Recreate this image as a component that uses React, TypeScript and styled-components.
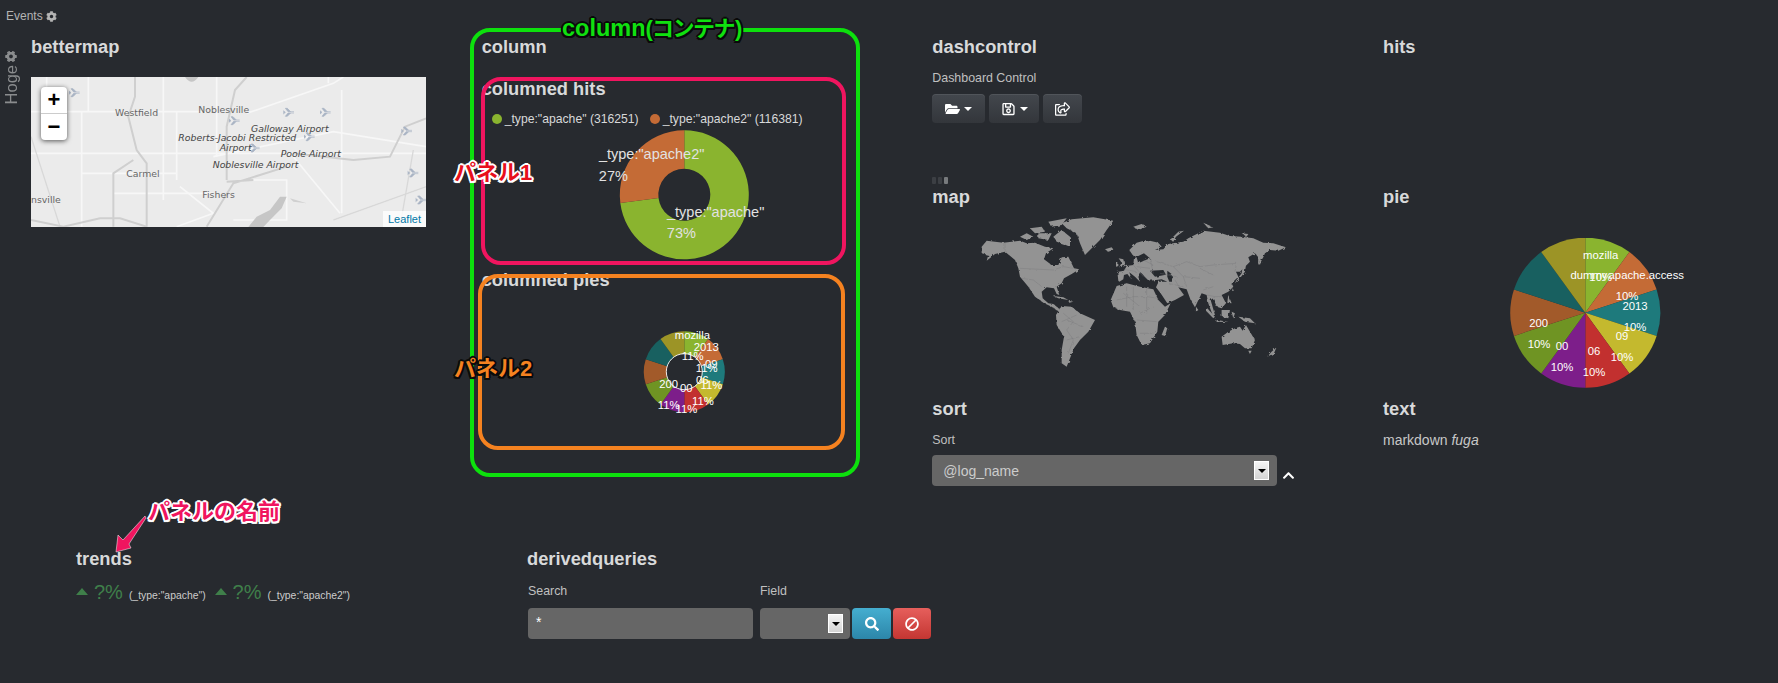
import React from 'react';
import styled, { createGlobalStyle } from 'styled-components';
import { FaBan, FaChevronUp, FaCog, FaFolderOpen, FaRegSave, FaRegShareSquare, FaSearch } from 'react-icons/fa';

const GlobalStyle = createGlobalStyle`
  html, body {
    margin: 0;
    padding: 0;
    background: #272a2f;
    font-family: "Liberation Sans", Arial, sans-serif;
    color: #c8c8c8;
  }
`;

const Page = styled.div`
  position: relative;
  width: 1778px;
  height: 683px;
  overflow: hidden;
  background: #272a2f;
`;

const TopBar = styled.div`
  display: flex;
  align-items: center;
  gap: 3px;
  height: 35px;
  padding: 0 0 3px 6px;
  box-sizing: border-box;
  font-size: 12px;
  color: #b4b4b4;
  svg { width: 11px; height: 11px; }
`;

const MainRow = styled.div`
  display: flex;
  height: 512px;
`;

const Rail = styled.div`
  width: 31px;
  flex: none;
  display: flex;
  align-items: flex-start;
  justify-content: center;
  padding-top: 15px;
  box-sizing: border-box;
`;

const RailLabel = styled.div`
  display: flex;
  align-items: center;
  gap: 3px;
  writing-mode: vertical-rl;
  transform: rotate(180deg);
  margin-left: -8px;
  font-size: 16.5px;
  color: #8a8c8e;
  svg { width: 12px; height: 12px; transform: rotate(90deg); }
`;

const Columns = styled.div`
  display: grid;
  grid-template-columns: repeat(4, 450.67px);
`;

const Column = styled.div`
  display: flex;
  flex-direction: column;
  align-items: flex-start;
`;

const Title = styled.h2<{ $top?: number }>`
  margin: ${p => p.$top || 0}px 0 0;
  font-size: 18.3px;
  line-height: 24px;
  font-weight: bold;
  color: #d8d9da;
  white-space: nowrap;
`;

const FieldLabel = styled.div<{ $top?: number }>`
  margin-top: ${p => p.$top ?? 11}px;
  font-size: 12.4px;
  line-height: 16px;
  color: #c0c0c0;
`;

const MapFrame = styled.div`
  position: relative;
  width: 395px;
  height: 150px;
  margin-top: 18px;
  overflow: hidden;
  background: #ebebeb;
  svg { display: block; }
`;

const ZoomControl = styled.div`
  position: absolute;
  left: 10px;
  top: 10px;
  width: 26px;
  border-radius: 4px;
  background: #fff;
  box-shadow: 0 1px 5px rgba(0, 0, 0, 0.65);
`;

const ZoomButton = styled.div`
  height: 26px;
  line-height: 26px;
  text-align: center;
  font-size: 22px;
  font-weight: bold;
  color: #000;
  & + & { border-top: 1px solid #ccc; }
`;

const Attribution = styled.div`
  position: absolute;
  right: 0;
  bottom: 0;
  padding: 0 5px;
  height: 16px;
  line-height: 16px;
  font-size: 11px;
  color: #0078a8;
  background: rgba(255, 255, 255, 0.8);
`;

const Legend = styled.div`
  display: flex;
  align-items: center;
  height: 16px;
  margin-top: 10px;
  padding-left: 10px;
  font-size: 12.2px;
  color: #d8d9da;
`;

const LegendDot = styled.span<{ $color: string; $gap?: number }>`
  width: 10px;
  height: 10px;
  border-radius: 50%;
  margin: 0 3px 0 ${p => p.$gap || 0}px;
  background: ${p => p.$color};
`;

const ChartBox = styled.div<{ $height: number; $top: number; $clip?: boolean }>`
  position: relative;
  width: 405px;
  height: ${p => p.$height}px;
  margin-top: ${p => p.$top}px;
  overflow: ${p => (p.$clip ? 'hidden' : 'visible')};
  svg { display: block; }
`;

const ChartLabel = styled.div<{ $x: number; $y: number; $size: number; $color: string }>`
  position: absolute;
  left: ${p => p.$x}px;
  top: ${p => p.$y}px;
  transform: translate(-50%, -50%);
  font-size: ${p => p.$size}px;
  color: ${p => p.$color};
  white-space: nowrap;
`;

const ButtonRow = styled.div`
  display: flex;
  gap: 4px;
  margin-top: 8px;
`;

const ToolButton = styled.div<{ $width: number }>`
  display: flex;
  align-items: center;
  justify-content: center;
  gap: 4px;
  width: ${p => p.$width}px;
  height: 29px;
  border-radius: 4px;
  color: #fff;
  background: linear-gradient(#43474d, #33363b);
  box-shadow: inset 0 1px 0 rgba(255, 255, 255, 0.08);
  svg { width: 15px; height: 14px; }
`;

const Caret = styled.span`
  width: 0;
  height: 0;
  border-left: 4px solid transparent;
  border-right: 4px solid transparent;
  border-top: 4px solid #fff;
`;

const Grips = styled.div`
  display: flex;
  gap: 2px;
  height: 7px;
  margin-top: 54px;
`;

const Grip = styled.span<{ $on?: boolean }>`
  width: 4px;
  height: 7px;
  border-radius: 1px;
  background: ${p => (p.$on ? '#777a7d' : '#3c3f44')};
`;

const WorldFrame = styled.div`
  width: 405px;
  height: 152px;
  margin-top: 6px;
  padding-left: 48px;
  box-sizing: border-box;
`;

const SortRow = styled.div`
  display: flex;
  align-items: flex-end;
  gap: 5px;
  margin-top: 7px;
  svg { width: 13px; height: 13px; margin-bottom: 4px; color: #fff; }
`;

const SelectBox = styled.div<{ $width: number }>`
  display: flex;
  align-items: center;
  justify-content: space-between;
  width: ${p => p.$width}px;
  height: 31px;
  padding: 0 8px 0 11px;
  box-sizing: border-box;
  border-radius: 4px;
  background: #666;
  font-size: 14px;
  color: #ccc;
`;

const SelectArrow = styled.span`
  display: flex;
  align-items: center;
  justify-content: center;
  width: 15px;
  height: 19px;
  box-sizing: border-box;
  border: 1px solid #fff;
  background: linear-gradient(#f4f4f4, #d4d4d4);
  &::after {
    content: '';
    border-left: 4px solid transparent;
    border-right: 4px solid transparent;
    border-top: 4px solid #000;
  }
`;

const MarkdownText = styled.div`
  margin-top: 9px;
  font-size: 14px;
  line-height: 20px;
  color: #c8c8c8;
`;

const BottomRow = styled.div`
  display: grid;
  grid-template-columns: 451px 451px;
  padding-left: 76px;
`;

const TrendRow = styled.div`
  display: flex;
  align-items: baseline;
  margin-top: 6px;
`;

const TrendItem = styled.div`
  display: flex;
  align-items: baseline;
  margin-right: 9px;
  white-space: nowrap;
`;

const TrendCaret = styled.span`
  align-self: center;
  width: 0;
  height: 0;
  margin: 0 6px 2px 0;
  border-left: 6.5px solid transparent;
  border-right: 6.5px solid transparent;
  border-bottom: 7px solid #3f7f4a;
`;

const TrendValue = styled.span`
  font-size: 20px;
  line-height: 30px;
  color: #3f7f4a;
  margin-right: 6px;
`;

const TrendQuery = styled.span`
  font-size: 10.4px;
  color: #ccc;
`;

const QueryForm = styled.div`
  display: flex;
  align-items: flex-end;
  margin-top: 12px;
`;

const QueryField = styled.div<{ $width: number }>`
  width: ${p => p.$width}px;
  margin-right: 6px;
  margin-left: 1px;
`;

const QueryLabel = styled.div`
  font-size: 12.4px;
  line-height: 16px;
  margin-bottom: 9px;
  color: #c0c0c0;
`;

const QueryInput = styled.div`
  height: 31px;
  padding: 0 8px;
  border-radius: 4px;
  background: #666;
  font-size: 14px;
  line-height: 29px;
  color: #fff;
`;

const ActionButton = styled.div<{ $from: string; $to: string; $width: number; $flip?: boolean }>`
  display: flex;
  align-items: center;
  justify-content: center;
  width: ${p => p.$width}px;
  height: 31px;
  margin-left: 2px;
  border-radius: 4px;
  color: #fff;
  background: linear-gradient(${p => p.$from}, ${p => p.$to});
  svg { width: 14px; height: 14px; transform: ${p => (p.$flip ? 'scaleX(-1)' : 'none')}; }
`;

const FieldSelect = styled(SelectBox)`
  padding-right: 7px;
`;

const ActionGroup = styled.div`
  display: flex;
  margin-left: -6px;
`;

const Frame = styled.div<{ $l: number; $t: number; $w: number; $h: number; $color: string }>`
  position: absolute;
  left: ${p => p.$l}px;
  top: ${p => p.$t}px;
  width: ${p => p.$w}px;
  height: ${p => p.$h}px;
  box-sizing: border-box;
  border: 4px solid ${p => p.$color};
  border-radius: 20px;
`;

const Note = styled.div<{ $l: number; $t: number; $color: string; $edge: string; $bg?: boolean }>`
  position: absolute;
  left: ${p => p.$l}px;
  top: ${p => p.$t}px;
  font-family: "Liberation Sans", "Noto Sans CJK JP", sans-serif;
  font-weight: bold;
  font-size: 22px;
  line-height: 26px;
  white-space: nowrap;
  color: ${p => p.$color};
  background: ${p => (p.$bg ? '#272a2f' : 'transparent')};
  text-shadow:
    2px 0 0 ${p => p.$edge}, -2px 0 0 ${p => p.$edge}, 0 2px 0 ${p => p.$edge}, 0 -2px 0 ${p => p.$edge},
    1.5px 1.5px 0 ${p => p.$edge}, -1.5px 1.5px 0 ${p => p.$edge}, 1.5px -1.5px 0 ${p => p.$edge}, -1.5px -1.5px 0 ${p => p.$edge};
`;

const NoteLatin = styled.span`
  font-size: 23.5px;
`;

const NoteKana = styled.span`
  letter-spacing: -1.5px;
  margin: 0 1px 0 -1px;
`;

const ArrowOverlay = styled.svg`
  position: absolute;
  left: 105px;
  top: 505px;
`;

interface Slice { value: number; color: string }
interface PieLabel { text: string; x: number; y: number }

const arcPath = (cx: number, cy: number, r: number, inner: number, from: number, to: number) => {
  const pt = (rad: number, a: number) => `${cx + rad * Math.sin(a)} ${cy - rad * Math.cos(a)}`;
  const large = to - from > Math.PI ? 1 : 0;
  if (!inner) return `M${cx} ${cy}L${pt(r, from)}A${r} ${r} 0 ${large} 1 ${pt(r, to)}Z`;
  return `M${pt(inner, from)}L${pt(r, from)}A${r} ${r} 0 ${large} 1 ${pt(r, to)}L${pt(inner, to)}A${inner} ${inner} 0 ${large} 0 ${pt(inner, from)}Z`;
};

const Pie: React.FC<{ slices: Slice[]; w: number; h: number; cx: number; cy: number; r: number; inner?: number; ring?: boolean }> = ({
  slices, w, h, cx, cy, r, inner = 0, ring = false,
}) => {
  const total = slices.reduce((sum, s) => sum + s.value, 0);
  let angle = 0;
  return (
    <svg width={w} height={h}>
      {slices.map(s => {
        const from = angle;
        angle += (s.value / total) * Math.PI * 2;
        return <path key={s.color} d={arcPath(cx, cy, r, inner, from, angle)} fill={s.color} />;
      })}
      {ring && <circle cx={cx} cy={cy} r={inner} fill="none" stroke="#fff" strokeWidth={0.9} />}
    </svg>
  );
};

const TEN = ['#8ab42f', '#c46b36', '#1e7a7c', '#c4b92e', '#c2302f', '#7d1e8a', '#6f9423', '#a25a2a', '#186060', '#9c9426'];
const tenSlices: Slice[] = TEN.map(color => ({ value: 1, color }));

const hitLabels: PieLabel[] = [
  { text: '_type:"apache2"', x: 170, y: 24.8 },
  { text: '27%', x: 131.7, y: 46.2 },
  { text: '_type:"apache"', x: 234, y: 82.2 },
  { text: '73%', x: 199.7, y: 103.8 },
];

const ringLabels: PieLabel[] = [
  { text: 'mozilla', x: 210.7, y: 4.3 },
  { text: '11%', x: 211, y: 25 },
  { text: '2013', x: 224.7, y: 16 },
  { text: '09', x: 229.7, y: 32.7 },
  { text: '11%', x: 225, y: 37.3 },
  { text: '06', x: 220.7, y: 48.7 },
  { text: '11%', x: 229.7, y: 54 },
  { text: '11%', x: 221.3, y: 70 },
  { text: '00', x: 204.7, y: 57.3 },
  { text: '11%', x: 204.7, y: 78.3 },
  { text: '200', x: 187, y: 53 },
  { text: '11%', x: 187, y: 74.3 },
];

const pieLabels: PieLabel[] = [
  { text: 'mozilla', x: 217.7, y: 17.3 },
  { text: '10%', x: 217.7, y: 38.7 },
  { text: 'dummy', x: 206, y: 37.3 },
  { text: 'apache.access', x: 263.3, y: 37.3 },
  { text: '10%', x: 244, y: 58 },
  { text: '2013', x: 252, y: 68 },
  { text: '10%', x: 252, y: 89 },
  { text: '09', x: 239, y: 98 },
  { text: '10%', x: 239, y: 119 },
  { text: '06', x: 211, y: 112.7 },
  { text: '10%', x: 211, y: 134 },
  { text: '00', x: 179, y: 107.7 },
  { text: '10%', x: 179, y: 129 },
  { text: '200', x: 155.7, y: 85 },
  { text: '10%', x: 156, y: 106 },
];

const LAND = [
  '185,680 200,662 250,668 300,662 320,670 345,668 375,680 400,685 378,700 372,718 395,735 415,735 425,712 445,710 462,745 478,748 455,762 432,775 425,790 410,800 418,825 410,822 402,805 380,802 365,815 368,835 385,850 400,852 412,862 425,866 412,872 395,860 370,848 345,830 325,800 300,770 295,745 285,720 255,695 225,702 200,722 205,705 185,700',
  '425,610 455,598 520,592 580,602 560,630 540,660 510,690 495,705 480,670 470,640 440,625',
  '300,650 320,640 340,650 320,660', '330,625 365,620 375,635 345,640', '355,640 395,640 385,660 355,655',
  '385,605 440,595 425,615 395,620', '400,650 425,630 450,650 450,680 430,672 410,665',
  '408,885 425,858 455,860 480,880 525,900 505,935 480,960 462,985 450,1015 440,1040 425,1030 425,990 432,950 410,915',
  '572,840 590,798 620,790 660,800 700,808 715,840 735,860 752,850 735,885 715,905 712,935 690,970 665,975 650,945 645,905 630,875 600,870 580,862',
  '735,920 742,925 735,948 725,945',
  '595,782 592,756 612,752 620,738 640,735 642,715 650,712 655,730 672,722 690,715 672,700 655,708 640,708 628,690 650,668 680,660 715,668 725,680 705,690 730,688 745,672 770,668 790,665 805,655 850,632 900,638 930,648 965,650 1000,655 1030,668 1060,670 1098,682 1075,692 1050,690 1035,700 1030,712 1015,735 1015,712 1005,700 985,712 990,725 975,740 960,755 948,755 955,770 935,790 940,800 925,815 905,825 918,850 905,865 890,860 880,835 872,840 885,885 878,885 865,850 860,825 845,820 825,862 812,840 800,808 775,802 792,825 765,840 742,850 722,820 708,802 716,785 742,785 725,778 690,782 678,775 665,760 655,770 660,785 645,770 628,757 635,778 622,762 612,765 610,778 598,785',
  '555,688 575,682 580,690 565,695', '640,620 665,612 680,620 655,630', '750,660 775,635 792,632 768,650 760,665',
  '850,608 880,622 865,625', '965,640 985,642 980,650', '596,715 610,718 615,738 598,742 605,728', '588,730 595,728 595,738 588,740',
  '978,735 975,755 960,775 945,790 950,780 965,760 968,740', '1018,700 1030,705 1020,735 1015,728',
  '862,865 885,890 880,895 858,872', '890,900 925,905 890,906', '905,870 930,870 925,895 905,890', '935,875 945,880 940,895',
  '925,825 935,850 922,848', '955,890 990,895 1005,910 975,905', '828,860 835,870 828,875', '938,805 942,812 936,812',
  '905,950 925,935 945,925 960,920 968,932 978,915 990,935 1005,960 995,985 975,985 960,972 940,970 908,975',
  '985,992 995,992 990,1002', '1070,982 1062,1000 1042,1010 1055,995',
  '400,828 430,832 445,840 415,835', '445,842 460,845 448,848',
];

const SEAS = ['690,752 730,750 738,764 705,770', '742,752 755,762 758,785 748,785 742,770'];

const BORDERS = [
  '255,668 255,698', '300,745 400,750 430,740 460,745', '305,775 340,780 365,800',
  '430,880 460,905 440,930 460,960 445,1000', '425,905 470,885',
  '590,840 640,830 680,830 715,835', '640,800 640,870', '680,805 680,880', '650,900 710,905', '660,940 700,940', '610,820 660,860',
  '710,725 760,740 800,725 840,740 880,735 950,730 945,755', '880,765 840,745', '760,740 790,770 840,775', '800,800 790,770',
  '640,735 670,770', '690,715 700,760', '612,748 650,755', '745,790 790,800', '765,780 780,805',
  '860,825 885,830 905,830', '880,800 850,810', '650,740 690,745', '670,720 700,735', '620,800 620,860', '700,860 660,880',
  '440,900 490,920', '440,960 480,950', '720,760 770,770',
];

const WorldMap = () => (
  <svg width={308.3} height={153.3} viewBox="180 585 925 460">
    <defs>
      <filter id="coast" x="-2%" y="-2%" width="104%" height="104%">
        <feTurbulence type="fractalNoise" baseFrequency="0.09" numOctaves={2} seed={4} />
        <feDisplacementMap in="SourceGraphic" scale={9} />
      </filter>
    </defs>
    <g filter="url(#coast)">
      {LAND.map(points => <polygon key={points} points={points} fill="#939393" />)}
      {SEAS.map(points => <polygon key={points} points={points} fill="#272a2f" />)}
      {BORDERS.map(points => <polyline key={points} points={points} fill="none" stroke="#737477" strokeWidth={1} />)}
    </g>
  </svg>
);

const PLANES = [[225, 278], [868, 337], [978, 337], [705, 362], [930, 410], [765, 444], [1222, 393], [1241, 519], [1265, 600]];

const ROADS = [
  'M93 335H620M265 231V335M245 335V680M140 231V335M490 231V600M530 335V540',
  'M93 460H1278M245 520H530M340 580H640M640 470L1000 395L1278 440',
  'M650 231V470M740 340L1000 250L1030 231M985 231V250M1025 270V640M540 560L640 640L530 680',
  'M760 540H860V660H700M1278 560L1000 660M880 470L1020 640',
];

const HIGHWAYS = [
  'M405 231V290L385 350L410 450L440 490L440 680M340 680V520L400 480',
  'M93 660L190 680M190 680L300 655H360L440 680',
  'M740 231L705 270L680 380V540',
  'M1278 355L1215 380L1170 470L1060 480L880 460',
  'M680 545L760 540M860 500L700 550L620 680',
];

const FAINT = ['M93 410L180 680', 'M1240 450L1200 680', 'M1278 560L1000 660'];

const LeafletTiles = () => (
  <svg width={395} height={150} viewBox="93 231 1185 450">
    <rect x={93} y={231} width={1185} height={450} fill="#ebebeb" />
    {ROADS.map(d => <path key={d} d={d} fill="none" stroke="#f7f7f7" strokeWidth={5} />)}
    {FAINT.map(d => <path key={d} d={d} fill="none" stroke="#d8d8d8" strokeWidth={4} />)}
    {HIGHWAYS.map(d => <path key={d} d={d} fill="none" stroke="#cfcfcf" strokeWidth={6} />)}
    <path d="M745 681L770 650L810 630L840 590L860 590L845 625L810 660L790 681Z" fill="#c6c6c6" />
    <path d="M555 231Q575 260 595 231Z" fill="#c6c6c6" />
    <path d="M870 595L920 610L880 605Z" fill="#d0d0d0" />
    {PLANES.map(([x, y]) => (
      <path
        key={`${x}-${y}`}
        d={`M${x + 14} ${y - 2}L${x - 4} ${y - 2}L${x - 12} ${y - 12}L${x - 6} ${y - 12}L${x + 4} ${y - 2}M${x + 14} ${y + 2}L${x - 4} ${y + 2}L${x - 12} ${y + 12}L${x - 6} ${y + 12}L${x + 4} ${y + 2}M${x - 18} ${y - 5}L${x - 12} ${y}L${x - 18} ${y + 5}`}
        fill="#a9b4c4"
        stroke="#a9b4c4"
        strokeWidth={2}
      />
    ))}
    <g fontFamily="'DejaVu Sans', sans-serif" fontSize={28} fill="#666">
      <text x={345} y={347}>Westfield</text>
      <text x={595} y={340}>Noblesville</text>
      <text x={379} y={531}>Carmel</text>
      <text x={607} y={595}>Fishers</text>
      <text x={93} y={608}>nsville</text>
    </g>
    <g fontFamily="'DejaVu Sans', sans-serif" fontSize={28} fontStyle="italic" fill="#444">
      <text x={753} y={395}>Galloway Airport</text>
      <text x={535} y={424}>Roberts-Jacobi Restricted</text>
      <text x={659} y={453}>Airport</text>
      <text x={842} y={470}>Poole Airport</text>
      <text x={638} y={504}>Noblesville Airport</text>
    </g>
  </svg>
);

const Labels: React.FC<{ items: PieLabel[]; size: number; color: string }> = ({ items, size, color }) => (
  <>
    {items.map(l => (
      <ChartLabel key={`${l.text}-${l.x}`} $x={l.x} $y={l.y} $size={size} $color={color}>{l.text}</ChartLabel>
    ))}
  </>
);

const App: React.FC = () => (
  <Page>
    <GlobalStyle />
    <TopBar>Events <FaCog /></TopBar>
    <MainRow>
      <Rail>
        <RailLabel>Hoge <FaCog /></RailLabel>
      </Rail>
      <Columns>
        <Column>
          <Title>bettermap</Title>
          <MapFrame>
            <LeafletTiles />
            <ZoomControl>
              <ZoomButton>+</ZoomButton>
              <ZoomButton>−</ZoomButton>
            </ZoomControl>
            <Attribution>Leaflet</Attribution>
          </MapFrame>
        </Column>

        <Column>
          <Title>column</Title>
          <Title $top={18}>columned hits</Title>
          <Legend>
            <LegendDot $color="#8ab42f" />
            _type:"apache" (316251)
            <LegendDot $color="#c46b36" $gap={11} />
            _type:"apache2" (116381)
          </Legend>
          <ChartBox $height={130} $top={2.5}>
            <Pie
              slices={[{ value: 73, color: '#8ab42f' }, { value: 27, color: '#c46b36' }]}
              w={405} h={130} cx={202.3} cy={64.8} r={64.5} inner={26}
            />
            <Labels items={hitLabels} size={14.5} color="#e2e2e2" />
          </ChartBox>
          <Title $top={8.5}>columned pies</Title>
          <ChartBox $height={82} $top={39} $clip>
            <Pie slices={tenSlices} w={405} h={82} cx={202.3} cy={40.7} r={40.5} inner={18} ring />
            <Labels items={ringLabels} size={11.3} color="#fff" />
          </ChartBox>
        </Column>

        <Column>
          <Title>dashcontrol</Title>
          <FieldLabel>Dashboard Control</FieldLabel>
          <ButtonRow>
            <ToolButton $width={53}><FaFolderOpen /><Caret /></ToolButton>
            <ToolButton $width={50}><FaRegSave /><Caret /></ToolButton>
            <ToolButton $width={39}><FaRegShareSquare /></ToolButton>
          </ButtonRow>
          <Grips><Grip /><Grip /><Grip $on /></Grips>
          <Title $top={1}>map</Title>
          <WorldFrame><WorldMap /></WorldFrame>
          <Title $top={30}>sort</Title>
          <FieldLabel>Sort</FieldLabel>
          <SortRow>
            <SelectBox $width={345}>@log_name<SelectArrow /></SelectBox>
            <FaChevronUp />
          </SortRow>
        </Column>

        <Column>
          <Title>hits</Title>
          <Title $top={126}>pie</Title>
          <ChartBox $height={149} $top={29}>
            <Pie slices={tenSlices} w={405} h={150} cx={202.3} cy={74.7} r={75} />
            <Labels items={pieLabels} size={11.3} color="#fff" />
          </ChartBox>
          <Title $top={10}>text</Title>
          <MarkdownText>markdown <em>fuga</em></MarkdownText>
        </Column>
      </Columns>
    </MainRow>

    <BottomRow>
      <Column>
        <Title>trends</Title>
        <TrendRow>
          <TrendItem>
            <TrendCaret /><TrendValue>?%</TrendValue><TrendQuery>(_type:"apache")</TrendQuery>
          </TrendItem>
          <TrendItem>
            <TrendCaret /><TrendValue>?%</TrendValue><TrendQuery>(_type:"apache2")</TrendQuery>
          </TrendItem>
        </TrendRow>
      </Column>
      <Column>
        <Title>derivedqueries</Title>
        <QueryForm>
          <QueryField $width={225}>
            <QueryLabel>Search</QueryLabel>
            <QueryInput>*</QueryInput>
          </QueryField>
          <QueryField $width={90}>
            <QueryLabel>Field</QueryLabel>
            <FieldSelect $width={90}><span /><SelectArrow /></FieldSelect>
          </QueryField>
          <ActionGroup>
            <ActionButton $from="#45aed0" $to="#2c86a9" $width={39}><FaSearch /></ActionButton>
            <ActionButton $from="#e65f5c" $to="#c43632" $width={38} $flip><FaBan /></ActionButton>
          </ActionGroup>
        </QueryForm>
      </Column>
    </BottomRow>

    <Frame $l={469.5} $t={28} $w={390} $h={449} $color="#0de00d" />
    <Frame $l={481} $t={76.5} $w={365} $h={188} $color="#f0155f" />
    <Frame $l={477.5} $t={274} $w={367.5} $h={176} $color="#f58220" />
    <Note $l={562} $t={15} $color="#10e010" $edge="#0a0a0a" $bg>
      <NoteLatin>column</NoteLatin>(<NoteKana>コンテナ</NoteKana>)
    </Note>
    <Note $l={454} $t={160} $color="#e8101c" $edge="#ffffff">パネル1</Note>
    <Note $l={454} $t={356} $color="#f58220" $edge="#0a0a0a">パネル2</Note>
    <Note $l={148} $t={499} $color="#f0155f" $edge="#ffffff">パネルの名前</Note>
    <ArrowOverlay width={50} height={55} viewBox="105 505 50 55">
      <path d="M145 516L146 518L129 544L131 548L116 552L118 535L123 540Z" fill="#f0155f" stroke="#fff" strokeWidth={0.5} />
    </ArrowOverlay>
  </Page>
);

export default App;
